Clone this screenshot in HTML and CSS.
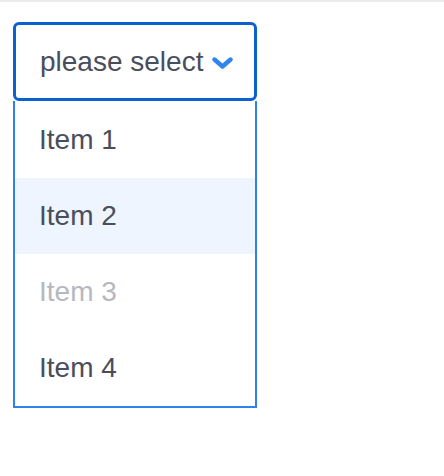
FILE: index.html
```html
<!DOCTYPE html>
<html>
<head>
<meta charset="utf-8">
<link rel="stylesheet" href="styles.css">
</head>
<body>
<div class="topbar"></div>
<div class="page">
  <div class="select">
    <span class="select-label">please select</span>
    <svg class="chevron" width="21" height="12" viewBox="0 0 21 12">
      <polyline points="2.5,2.5 10.5,9.5 18.5,2.5" fill="none" stroke="#3085f0" stroke-width="4.4" stroke-linecap="round" stroke-linejoin="round"/>
    </svg>
  </div>
  <ul class="menu">
    <li class="item">Item 1</li>
    <li class="item item-hover">Item 2</li>
    <li class="item item-disabled">Item 3</li>
    <li class="item">Item 4</li>
  </ul>
</div>
</body>
</html>
```
FILE: styles.css
```css
html, body {
  margin: 0;
  padding: 0;
  background: #ffffff;
}
body {
  font-family: "Liberation Sans", Arial, sans-serif;
  color: #4a4e5c;
}
.topbar {
  height: 2px;
  background: #ebebeb;
}
.page {
  padding: 20px 0 0 13px;
}
.select {
  box-sizing: border-box;
  width: 244px;
  height: 79px;
  border: 3px solid #0b60d2;
  border-radius: 6px;
  display: flex;
  align-items: center;
  padding-left: 24px;
  gap: 9px;
}
.select-label {
  font-size: 28px;
  color: #4a4e5c;
  margin-top: 1px;
}
.chevron {
  display: block;
  margin-top: 2px;
}
.menu {
  list-style: none;
  margin: 0;
  padding: 1px 0 0 0;
  box-sizing: border-box;
  width: 244px;
  border: 2px solid #2d82ec;
  border-top: none;
}
.item {
  height: 76px;
  display: flex;
  align-items: center;
  padding-left: 24px;
  font-size: 28px;
  color: #4a4e5c;
}
.item-hover {
  background: #eef5fe;
}
.item-disabled {
  color: #b6b7bf;
}
```
